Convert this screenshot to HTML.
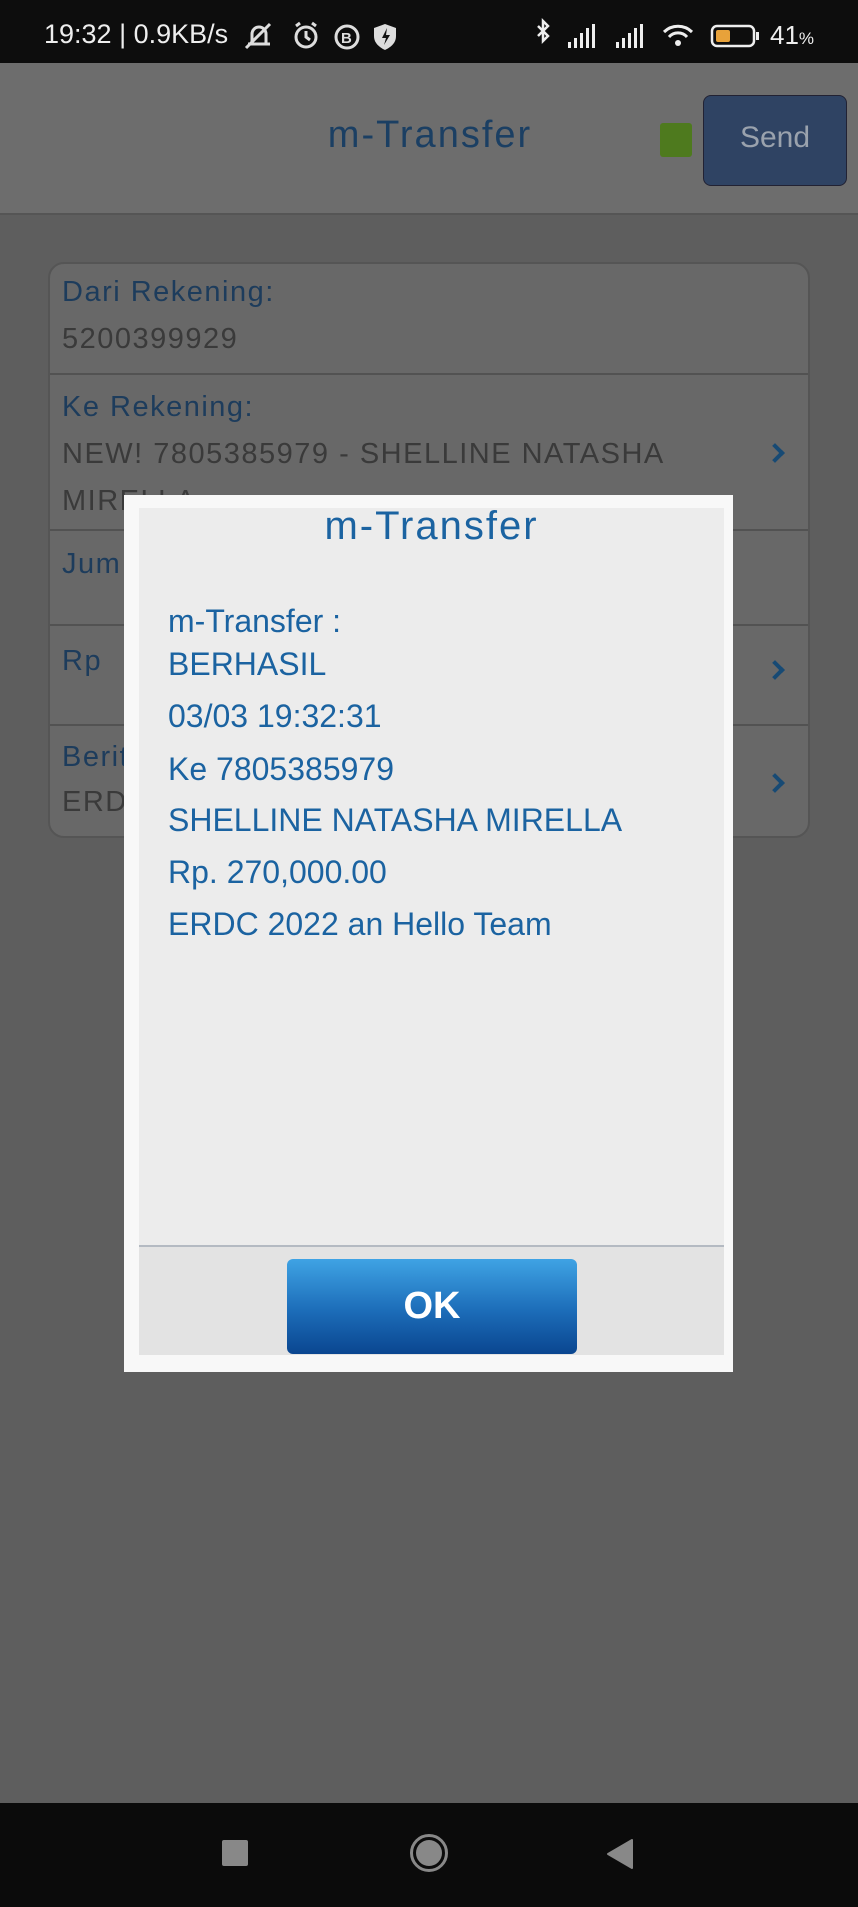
<!DOCTYPE html>
<html><head><meta charset="utf-8"><style>
*{margin:0;padding:0;box-sizing:border-box}
body{width:858px;height:1907px;background:#5e5e5e;font-family:"Liberation Sans",sans-serif;position:relative;overflow:hidden}
.a{position:absolute}
.n{display:inline-block;white-space:nowrap}
.lbl{color:#1d3c5c;font-size:29px;letter-spacing:1.5px}
.val{color:#3a3a3a;font-size:29px;letter-spacing:1.5px}
.chev{position:absolute;left:768px;width:14px;height:14px;border-right:4px solid #174a74;border-top:4px solid #174a74;transform:rotate(45deg)}
.dl{color:#1b63a1;font-size:32px;position:absolute;left:168px;white-space:nowrap}
</style></head><body>
<div class="a" style="left:0;top:0;width:858px;height:63px;background:#0d0d0d"></div>
<div class="a" style="left:44px;top:19px;color:#eee;font-size:27px"><span class="n">19:32 | 0.9KB/s</span></div>
<svg class="a" style="left:240px;top:18px" width="170" height="36" viewBox="0 0 170 36">
<g fill="none" stroke="#ddd" stroke-width="3"><path d="M8 26h22M12 26v-10a7 7 0 0 1 14 0v10M6 30L30 6"/><circle cx="66" cy="19" r="10"/><path d="M66 13v6l4 3M56 8l4-3M76 8l-4-3"/><circle cx="107" cy="19" r="11"/></g>
<text x="101" y="25" fill="#ddd" font-size="15" font-weight="bold" font-family="Liberation Sans">B</text>
<path d="M145 6l11 4v8c0 7-5 11-11 14c-6-3-11-7-11-14v-8z" fill="#ddd"/><path d="M147 10l-5 10h4l-2 7 6-10h-4z" fill="#111"/></svg>
<svg class="a" style="left:530px;top:16px" width="320" height="40" viewBox="0 0 320 40">
<path d="M8 10l10 10-5 5V5l5 5-10 10" fill="none" stroke="#eee" stroke-width="2.5"/>
<g fill="#eee"><rect x="38" y="26" width="3" height="6"/><rect x="44" y="22" width="3" height="10"/><rect x="50" y="17" width="3" height="15"/><rect x="56" y="12" width="3" height="20"/><rect x="62" y="8" width="3" height="24"/>
<rect x="86" y="26" width="3" height="6"/><rect x="92" y="22" width="3" height="10"/><rect x="98" y="17" width="3" height="15"/><rect x="104" y="12" width="3" height="20"/><rect x="110" y="8" width="3" height="24"/></g>
<g fill="none" stroke="#eee" stroke-width="3"><path d="M134 16a20 20 0 0 1 28 0M139 21a12 12 0 0 1 18 0"/></g><circle cx="148" cy="27" r="3" fill="#eee"/>
<rect x="182" y="10" width="42" height="20" rx="5" fill="none" stroke="#eee" stroke-width="2.5"/><rect x="186" y="14" width="14" height="12" rx="2" fill="#e8a23a"/><rect x="226" y="16" width="3" height="8" fill="#eee"/></svg>
<div class="a" style="left:770px;top:20px;color:#eee;font-size:26px">41<span style="font-size:17px">%</span></div>
<div class="a" style="left:0;top:63px;width:858px;height:152px;background:#6d6d6d;border-bottom:2px solid #555"></div>
<div class="a" style="left:0;top:114px;width:860px;text-align:center;color:#1b3f63;font-size:38px;letter-spacing:2px">m-Transfer</div>
<div class="a" style="left:660px;top:123px;width:32px;height:34px;background:#4e7a1e;border-radius:3px"></div>
<div class="a" style="left:703px;top:95px;width:144px;height:91px;background:#2f4363;border-radius:8px;border:1px solid #223"></div>
<div class="a" style="left:703px;top:121px;width:144px;text-align:center;color:#9aa2ad;font-size:30px">Send</div>
<div class="a" style="left:48px;top:262px;width:762px;height:576px;background:#686868;border:2px solid #555;border-radius:16px"></div>
<div class="a" style="left:50px;top:373px;width:758px;height:2px;background:#525252"></div>
<div class="a" style="left:50px;top:529px;width:758px;height:2px;background:#525252"></div>
<div class="a" style="left:50px;top:624px;width:758px;height:2px;background:#525252"></div>
<div class="a" style="left:50px;top:724px;width:758px;height:2px;background:#525252"></div>
<div class="a lbl" style="left:62px;top:276px"><span class="n">Dari Rekening:</span></div>
<div class="a val" style="left:62px;top:323px"><span class="n">5200399929</span></div>
<div class="a lbl" style="left:62px;top:391px"><span class="n">Ke Rekening:</span></div>
<div class="a val" style="left:62px;top:438px"><span class="n">NEW! 7805385979 - SHELLINE NATASHA</span></div>
<div class="a val" style="left:62px;top:485px"><span class="n">MIRELLA</span></div>
<div class="a lbl" style="left:62px;top:548px"><span class="n">Jum</span></div>
<div class="a lbl" style="left:62px;top:645px"><span class="n">Rp</span></div>
<div class="a lbl" style="left:62px;top:741px"><span class="n">Berit</span></div>
<div class="a val" style="left:62px;top:786px"><span class="n">ERD</span></div>
<div class="chev" style="top:446px"></div>
<div class="chev" style="top:663px"></div>
<div class="chev" style="top:776px"></div>
<div class="a" style="left:124px;top:495px;width:609px;height:877px;background:#f8f8f8"></div>
<div class="a" style="left:139px;top:508px;width:585px;height:847px;background:#ececec"></div>
<div class="a" style="left:139px;top:504px;width:585px;text-align:center;color:#1b63a1;font-size:40px;letter-spacing:2px">m-Transfer</div>
<div class="dl" style="top:603px">m-Transfer :</div>
<div class="dl" style="top:646px">BERHASIL</div>
<div class="dl" style="top:698px">03/03 19:32:31</div>
<div class="dl" style="top:751px">Ke 7805385979</div>
<div class="dl" style="top:802px">SHELLINE NATASHA MIRELLA</div>
<div class="dl" style="top:854px">Rp. 270,000.00</div>
<div class="dl" style="top:906px">ERDC 2022 an Hello Team</div>
<div class="a" style="left:139px;top:1245px;width:585px;height:2px;background:#b4bac2"></div>
<div class="a" style="left:139px;top:1247px;width:585px;height:108px;background:#e3e3e3"></div>
<div class="a" style="left:287px;top:1259px;width:290px;height:95px;border-radius:6px;background:linear-gradient(#3fa3e4,#1c6cb8 55%,#0a4690);color:#fff;font-weight:bold;font-size:38px;text-align:center;line-height:95px">OK</div>
<div class="a" style="left:0;top:1803px;width:858px;height:104px;background:#0b0b0b"></div>
<div class="a" style="left:222px;top:1840px;width:26px;height:26px;background:#888;border-radius:2px"></div>
<div class="a" style="left:410px;top:1834px;width:38px;height:38px;border:3px solid #888;border-radius:50%"></div>
<div class="a" style="left:416px;top:1840px;width:26px;height:26px;background:#888;border-radius:50%"></div>
<svg class="a" style="left:606px;top:1838px" width="28" height="32"><path d="M26 2v28L2 16z" fill="#888" stroke="#888" stroke-linejoin="round" stroke-width="2"/></svg>
</body></html>
